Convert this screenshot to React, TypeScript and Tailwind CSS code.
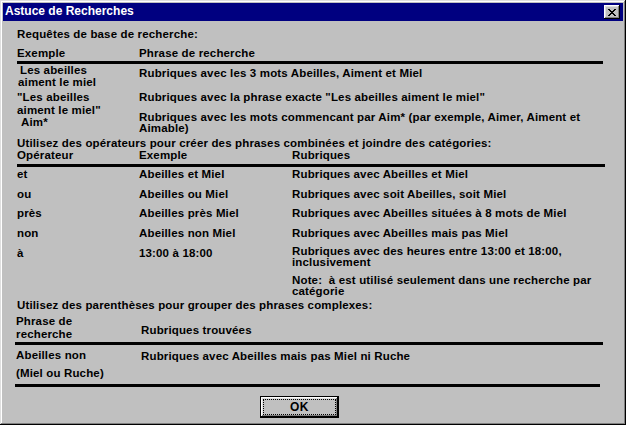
import React from "react";

const bevel =
  "shadow-[inset_-1px_-1px_#000,inset_1px_1px_#fff,inset_-2px_-2px_#808080,inset_2px_2px_#dfdfdf]";

function Rule({ className = "" }: { className?: string }) {
  return <div className={`h-[3px] bg-black ${className}`} />;
}

export default function App() {
  return (
    <div className="w-[626px] h-[425px] overflow-hidden bg-[#c0c0c0] p-[3px] text-black font-bold text-[11.5px] tracking-[0.15px] leading-[13px] font-['Liberation_Sans',Arial,sans-serif] shadow-[inset_-1px_-1px_#000,inset_1px_1px_#dfdfdf,inset_-2px_-2px_#808080,inset_2px_2px_#fff]">
      {/* barre de titre */}
      <div className="h-[18px] bg-[#000080] flex items-start justify-between pl-[2px] pr-[3px]">
        <span className="text-white pt-[2px] whitespace-nowrap text-[12px] tracking-[0px]">Astuce de Recherches</span>
        <button className={`mt-[2px] w-[16px] h-[14px] bg-[#c0c0c0] flex items-center justify-center ${bevel}`}>
          <svg width="8" height="7" viewBox="0 0 8 7" shapeRendering="crispEdges">
            <path
              fill="#000"
              d="M0 0h2v1H0zM6 0h2v1H6zM1 1h2v1H1zM5 1h2v1H5zM2 2h4v1H2zM3 3h2v1H3zM2 4h4v1H2zM1 5h2v1H1zM5 5h2v1H5zM0 6h2v1H0zM6 6h2v1H6z"
            />
          </svg>
        </button>
      </div>

      <div className="pl-[14px] whitespace-nowrap">
        {/* Requêtes de base */}
        <div className="mt-[7px]">Requêtes de base de recherche:</div>
        <div className="mt-[6px] grid grid-cols-[122px_1fr]">
          <span>Exemple</span>
          <span>Phrase de recherche</span>
        </div>
        <Rule className="mt-[1px] w-[586px]" />

        <div className="h-[27px] grid grid-cols-[122px_1fr]">
          <div className="leading-[12px] pl-[3px]">
            <div>Les abeilles</div>
            <div className="-ml-[2px]">aiment le miel</div>
          </div>
          <div className="pt-[3px]">Rubriques avec les 3 mots Abeilles, Aiment et Miel</div>
        </div>
        <div className="h-[21px] grid grid-cols-[122px_1fr]">
          <div>
            <div>"Les abeilles</div>
            <div>aiment le miel"</div>
          </div>
          <div>Rubriques avec la phrase exacte "Les abeilles aiment le miel"</div>
        </div>
        <div className="h-[25px] grid grid-cols-[122px_1fr]">
          <div className="pt-[4px] pl-[4px]">Aim*</div>
          <div className="leading-[11px]">
            <div>Rubriques avec les mots commencant par Aim* (par exemple, Aimer, Aiment et</div>
            <div>Aimable)</div>
          </div>
        </div>

        {/* Opérateurs */}
        <div className="h-[12px]">Utilisez des opérateurs pour créer des phrases combinées et joindre des catégories:</div>
        <div className="h-[15px] grid grid-cols-[122px_153px_1fr]">
          <span>Opérateur</span>
          <span>Exemple</span>
          <span>Rubriques</span>
        </div>
        <Rule className="w-[588px]" />

        <div className="h-[21px] pt-[1px] grid grid-cols-[122px_153px_1fr]">
          <span>et</span>
          <span>Abeilles et Miel</span>
          <span>Rubriques avec Abeilles et Miel</span>
        </div>
        <div className="h-[19px] grid grid-cols-[122px_153px_1fr]">
          <span>ou</span>
          <span>Abeilles ou Miel</span>
          <span>Rubriques avec soit Abeilles, soit Miel</span>
        </div>
        <div className="h-[20px] grid grid-cols-[122px_153px_1fr]">
          <span>près</span>
          <span>Abeilles près Miel</span>
          <span>Rubriques avec Abeilles situées à 8 mots de Miel</span>
        </div>
        <div className="h-[20px] grid grid-cols-[122px_153px_1fr]">
          <span>non</span>
          <span>Abeilles non Miel</span>
          <span>Rubriques avec Abeilles mais pas Miel</span>
        </div>
        <div className="h-[52px] grid grid-cols-[122px_153px_1fr]">
          <span>à</span>
          <span>13:00 à 18:00</span>
          <div className="-mt-[1px] leading-[11px]">
            <div>Rubriques avec des heures entre 13:00 et 18:00,</div>
            <div>inclusivement</div>
            <div className="mt-[7px] whitespace-pre">Note:  à est utilisé seulement dans une recherche par</div>
            <div>catégorie</div>
          </div>
        </div>

        {/* Parenthèses */}
        <div className="h-[16px]">Utilisez des parenthèses pour grouper des phrases complexes:</div>
        <div className="h-[27px] -ml-[1px] grid grid-cols-[125px_1fr]">
          <div>
            <div>Phrase de</div>
            <div>recherche</div>
          </div>
          <div className="pt-[9px]">Rubriques trouvées</div>
        </div>
        <Rule className="-ml-[2px] w-[588px]" />
        <div className="h-[39px] -ml-[1px] grid grid-cols-[125px_1fr]">
          <div className="pt-[4px]">
            <div>Abeilles non</div>
            <div className="mt-[5px]">(Miel ou Ruche)</div>
          </div>
          <div className="pt-[5px]">Rubriques avec Abeilles mais pas Miel ni Ruche</div>
        </div>
        <Rule className="-ml-[2px] w-[585px]" />
      </div>

      <div className="mt-[9px] pl-[257px]">
        <button className="w-[79px] h-[22px] p-[3px] bg-[#c0c0c0] shadow-[inset_0_0_0_1px_#000,inset_-2px_-2px_#000,inset_2px_2px_#fff,inset_-3px_-3px_#808080,inset_3px_3px_#dfdfdf]">
          <div className="h-full w-full border border-dotted border-black flex items-center justify-center text-[12px] tracking-[0.5px]">
            OK
          </div>
        </button>
      </div>
    </div>
  );
}
